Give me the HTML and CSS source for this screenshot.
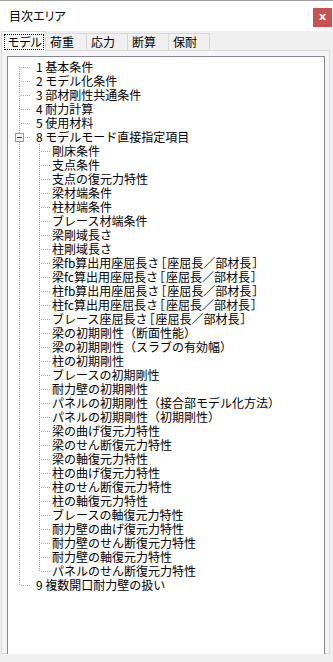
FILE: index.html
```html
<!DOCTYPE html>
<html lang="ja">
<head>
    <meta charset="UTF-8">
    <title>目次エリア</title>
    <link rel="stylesheet" href="styles.css">
</head>
<body>
    <div class="titlebar">
        <span class="title">目次エリア</span>
        <div class="close">x</div>
    </div>

    <div class="tabs">
        <div class="tab active"><span class="focus">モデル</span></div>
        <div class="tab">荷重</div>
        <div class="tab">応力</div>
        <div class="tab">断算</div>
        <div class="tab last">保耐</div>
    </div>

    <div class="tabbody">
        <div class="tree">
            <div class="row"><span class="g first branch"></span><span class="label root">1 基本条件</span></div>
            <div class="row"><span class="g branch"></span><span class="label root">2 モデル化条件</span></div>
            <div class="row"><span class="g branch"></span><span class="label root">3 部材剛性共通条件</span></div>
            <div class="row"><span class="g branch"></span><span class="label root">4 耐力計算</span></div>
            <div class="row"><span class="g branch"></span><span class="label root">5 使用材料</span></div>
            <div class="row"><span class="g branch"><span class="box"></span></span><span class="label root">8 モデルモード直接指定項目</span></div>

            <div class="row"><span class="g"></span><span class="g branch"></span><span class="label">剛床条件</span></div>
            <div class="row"><span class="g"></span><span class="g branch"></span><span class="label">支点条件</span></div>
            <div class="row"><span class="g"></span><span class="g branch"></span><span class="label">支点の復元力特性</span></div>
            <div class="row"><span class="g"></span><span class="g branch"></span><span class="label">梁材端条件</span></div>
            <div class="row"><span class="g"></span><span class="g branch"></span><span class="label">柱材端条件</span></div>
            <div class="row"><span class="g"></span><span class="g branch"></span><span class="label">ブレース材端条件</span></div>
            <div class="row"><span class="g"></span><span class="g branch"></span><span class="label">梁剛域長さ</span></div>
            <div class="row"><span class="g"></span><span class="g branch"></span><span class="label">柱剛域長さ</span></div>
            <div class="row"><span class="g"></span><span class="g branch"></span><span class="label">梁fb算出用座屈長さ<span class="br">［</span>座屈長／部材長<span class="br">］</span></span></div>
            <div class="row"><span class="g"></span><span class="g branch"></span><span class="label">梁fc算出用座屈長さ<span class="br">［</span>座屈長／部材長<span class="br">］</span></span></div>
            <div class="row"><span class="g"></span><span class="g branch"></span><span class="label">柱fb算出用座屈長さ<span class="br">［</span>座屈長／部材長<span class="br">］</span></span></div>
            <div class="row"><span class="g"></span><span class="g branch"></span><span class="label">柱fc算出用座屈長さ<span class="br">［</span>座屈長／部材長<span class="br">］</span></span></div>
            <div class="row"><span class="g"></span><span class="g branch"></span><span class="label">ブレース座屈長さ<span class="br">［</span>座屈長／部材長<span class="br">］</span></span></div>
            <div class="row"><span class="g"></span><span class="g branch"></span><span class="label">梁の初期剛性（断面性能）</span></div>
            <div class="row"><span class="g"></span><span class="g branch"></span><span class="label">梁の初期剛性（スラブの有効幅）</span></div>
            <div class="row"><span class="g"></span><span class="g branch"></span><span class="label">柱の初期剛性</span></div>
            <div class="row"><span class="g"></span><span class="g branch"></span><span class="label">ブレースの初期剛性</span></div>
            <div class="row"><span class="g"></span><span class="g branch"></span><span class="label">耐力壁の初期剛性</span></div>
            <div class="row"><span class="g"></span><span class="g branch"></span><span class="label">パネルの初期剛性（接合部モデル化方法）</span></div>
            <div class="row"><span class="g"></span><span class="g branch"></span><span class="label">パネルの初期剛性（初期剛性）</span></div>
            <div class="row"><span class="g"></span><span class="g branch"></span><span class="label">梁の曲げ復元力特性</span></div>
            <div class="row"><span class="g"></span><span class="g branch"></span><span class="label">梁のせん断復元力特性</span></div>
            <div class="row"><span class="g"></span><span class="g branch"></span><span class="label">梁の軸復元力特性</span></div>
            <div class="row"><span class="g"></span><span class="g branch"></span><span class="label">柱の曲げ復元力特性</span></div>
            <div class="row"><span class="g"></span><span class="g branch"></span><span class="label">柱のせん断復元力特性</span></div>
            <div class="row"><span class="g"></span><span class="g branch"></span><span class="label">柱の軸復元力特性</span></div>
            <div class="row"><span class="g"></span><span class="g branch"></span><span class="label">ブレースの軸復元力特性</span></div>
            <div class="row"><span class="g"></span><span class="g branch"></span><span class="label">耐力壁の曲げ復元力特性</span></div>
            <div class="row"><span class="g"></span><span class="g branch"></span><span class="label">耐力壁のせん断復元力特性</span></div>
            <div class="row"><span class="g"></span><span class="g branch"></span><span class="label">耐力壁の軸復元力特性</span></div>
            <div class="row"><span class="g"></span><span class="g last branch"></span><span class="label">パネルのせん断復元力特性</span></div>

            <div class="row"><span class="g last branch"></span><span class="label root">9 複数開口耐力壁の扱い</span></div>
        </div>
    </div>
</body>
</html>
```

FILE: styles.css
```css
body {
    margin: 0;
    background-color: #f0f0f0;
    font-family: "Noto Sans CJK JP", sans-serif;
    font-size: 12px;
    color: #000;
}

.titlebar {
    display: flex;
    align-items: flex-start;
    justify-content: space-between;
    height: 30px;
    background-color: #fff;
    border-top: 1px solid #9c9c9c;
}

.title {
    margin: 7px 0 0 9px;
    font-size: 12px;
    line-height: 16px;
    font-feature-settings: "palt";
}

.close {
    width: 19px;
    height: 19px;
    margin: 7px 1px 0 0;
    background-color: #c75050;
    color: #fff;
    font-family: "DejaVu Sans", sans-serif;
    font-weight: bold;
    font-size: 11px;
    line-height: 17px;
    text-align: center;
}

.tabs {
    display: flex;
    align-items: flex-end;
    height: 19px;
    padding-left: 1px;
}

.tab {
    box-sizing: border-box;
    width: 41px;
    height: 17px;
    padding-left: 4px;
    border-top: 1px solid #d9d9d9;
    border-right: 1px solid #d9d9d9;
    line-height: 16px;
    white-space: nowrap;
    font-feature-settings: "palt";
}

.tab.active {
    position: relative;
    z-index: 1;
    width: 45px;
    height: 20px;
    margin-bottom: -1px;
    padding: 2px 1px 0 2px;
    border-left: 1px solid #d9d9d9;
    background-color: #fff;
}

.focus {
    display: block;
    height: 14px;
    padding-left: 3px;
    border: 1px dotted #000;
    line-height: 14px;
}

.tabbody {
    height: 604px;
    width: 329px;
    margin-left: 1px;
    padding: 5px 4px 4px 5px;
    box-sizing: border-box;
    border: 1px solid #d9d9d9;
    background-color: #f5f5f5;
}

.tree {
    box-sizing: border-box;
    height: 599px;
    padding: 3px 0 0 2px;
    border: 1px solid #828790;
    background-color: #fff;
}

.row {
    display: flex;
    align-items: center;
    height: 14px;
    white-space: nowrap;
}

.g {
    position: relative;
    flex: none;
    width: 20px;
    height: 14px;
}

.g::before {
    content: "";
    position: absolute;
    left: 9px;
    top: 0;
    bottom: 0;
    width: 1px;
    background: repeating-linear-gradient(to bottom, #a0a0a0 0 1px, transparent 1px 2px);
}

.g.first::before {
    top: 7px;
}

.g.last::before {
    bottom: 7px;
}

.g.branch::after {
    content: "";
    position: absolute;
    left: 11px;
    top: 7px;
    width: 10px;
    height: 1px;
    background: repeating-linear-gradient(to right, #a0a0a0 0 1px, transparent 1px 2px);
}

.box {
    position: absolute;
    z-index: 1;
    left: 5px;
    top: 3px;
    box-sizing: border-box;
    width: 9px;
    height: 9px;
    border: 1px solid #8e9bb3;
    background: linear-gradient(#fff, #e4e7ee);
}

.box::after {
    content: "";
    position: absolute;
    left: 1px;
    top: 3px;
    width: 5px;
    height: 1px;
    background-color: #1c3b73;
}

.label {
    margin-left: 2px;
    line-height: 14px;
}

.label.root {
    margin-left: 6px;
}

.br {
    font-feature-settings: "palt";
    margin: 0 1px;
}
```
